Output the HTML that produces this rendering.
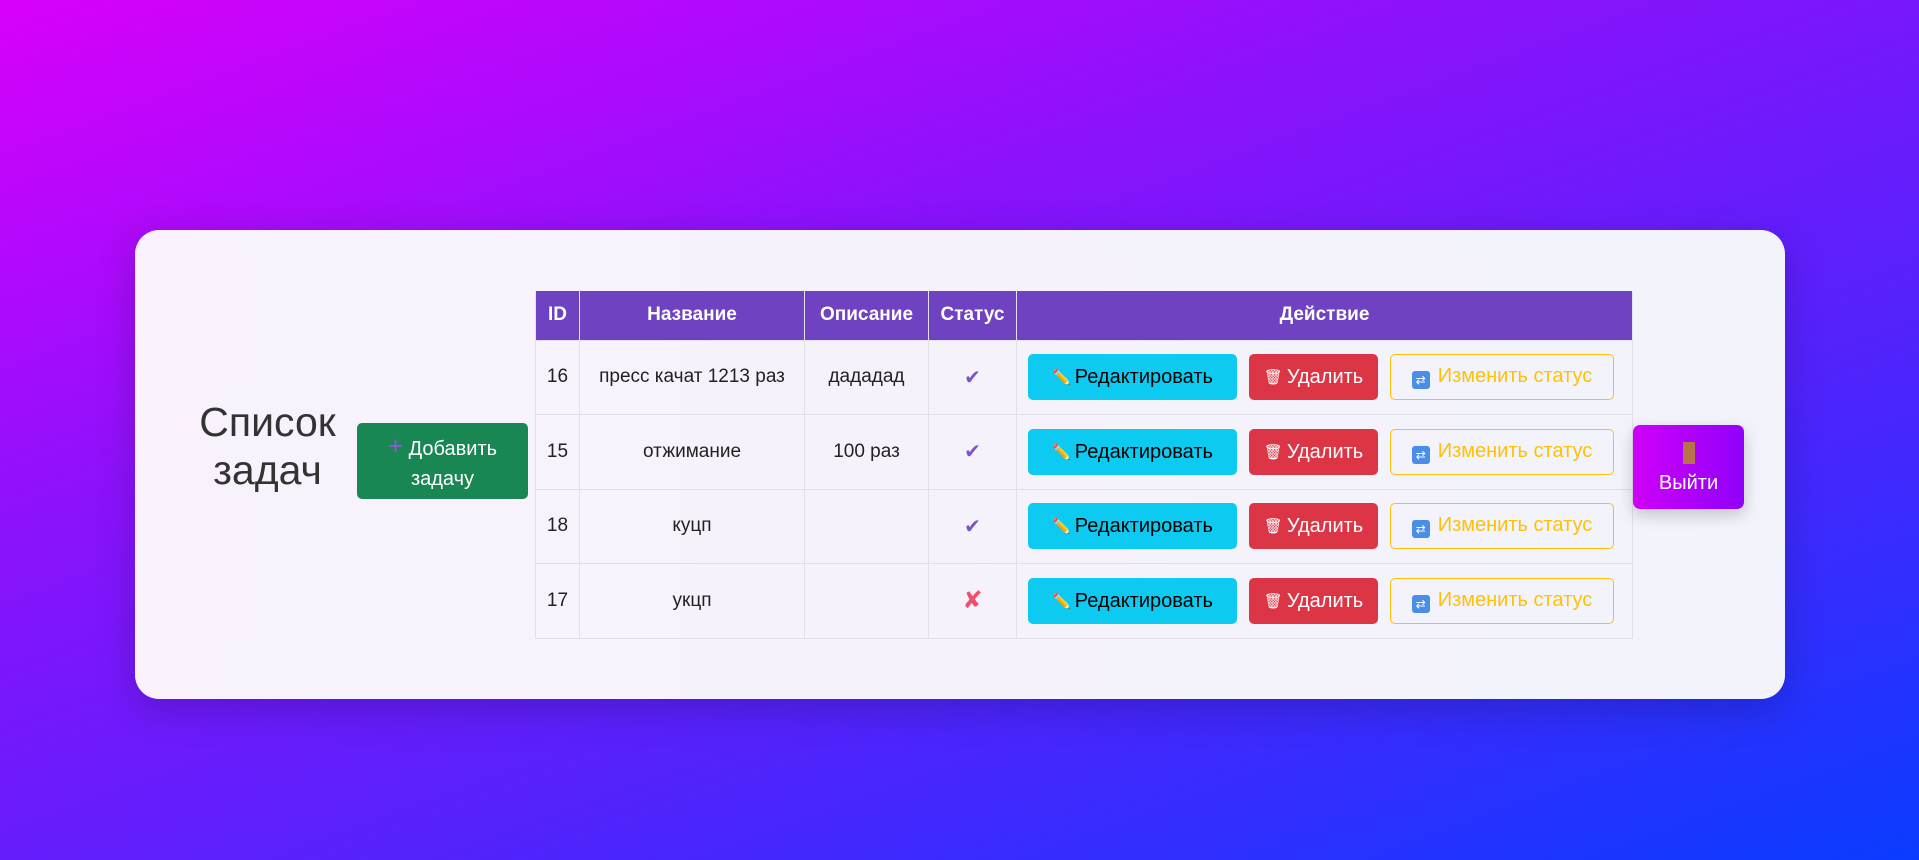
<!DOCTYPE html>
<html><head><meta charset="utf-8"><style>
*{box-sizing:border-box;margin:0;padding:0}
body{width:1919px;height:860px;overflow:hidden;font-family:"Liberation Sans","DejaVu Sans",sans-serif;background:linear-gradient(160deg,#d800fb 0%,#8a12fc 35%,#4a25fd 70%,#0a3cff 100%);position:relative}
.card{position:absolute;left:135px;top:230px;width:1650px;height:469px;border-radius:24px;background:linear-gradient(90deg,#f9f2fc,#f2f3fb);box-shadow:0 10px 40px rgba(0,0,0,.2)}
.title{position:absolute;left:180px;top:398px;width:175px;text-align:center;font-size:41px;line-height:48px;color:#333}
.add{position:absolute;left:357px;top:423px;width:171px;height:76px;background:#198754;border-radius:5px;color:#fff;font-size:20px;line-height:30px;text-align:center;padding-top:8px}
.add b{color:#8a5cd0;font-weight:normal;font-size:26px}
table{position:absolute;left:535px;top:291px;border-collapse:collapse;font-size:19px;color:#222}
th{background:#6f42c1;color:#fff;height:49px;font-size:19px;font-weight:bold;border:1px solid #e4e0ec;border-top:none}
td{height:74.5px;border:1px solid #e2dfe8;text-align:center;vertical-align:middle}
td.act{text-align:left;padding-left:11px;white-space:nowrap}
.ok{color:#7a55c8;font-size:20px}
.no{color:#f0506e;font-size:24px}
.btn{display:inline-block;height:46px;line-height:46px;border-radius:5px;font-size:20px;vertical-align:middle;text-align:center}
.e{width:209px;background:#0dcaf0;color:#000}
.d{width:129px;background:#dc3545;color:#fff;margin-left:12px}
.s{width:224px;border:1.5px solid #ffc107;color:#ffc107;margin-left:12px;line-height:43px}
.em{font-size:15px;vertical-align:1px;margin-right:4px}
.ico{display:inline-block;width:18px;height:18px;border-radius:3px;background:#4a8ee8;vertical-align:-2px;margin-right:8px;color:#fff;font-size:12px;line-height:18px}
.logout{position:absolute;left:1633px;top:425px;width:111px;height:84px;border-radius:7px;background:linear-gradient(90deg,#cf00fa,#9000fa);color:#fff;font-size:20px;text-align:center;box-shadow:0 6px 16px rgba(0,0,0,.2)}
.door{display:block;width:12px;height:22px;background:#b7744a;margin:17px auto 8px}
</style></head><body>
<div class="card"></div>
<div class="title">Список задач</div>
<div class="add"><b>+</b> Добавить<br>задачу</div>
<table>
<tr><th style="width:44px">ID</th><th style="width:225px">Название</th><th style="width:124px">Описание</th><th style="width:88px">Статус</th><th style="width:616px">Действие</th></tr>
<tr><td>16</td><td>пресс качат 1213 раз</td><td>дададад</td><td class="ok">✔</td><td class="act"><span class="btn e"><span class="em">✏️</span>Редактировать</span><span class="btn d"><span class="em">🗑</span>Удалить</span><span class="btn s"><span class="ico">⇄</span>Изменить статус</span></td></tr>
<tr><td>15</td><td>отжимание</td><td>100 раз</td><td class="ok">✔</td><td class="act"><span class="btn e"><span class="em">✏️</span>Редактировать</span><span class="btn d"><span class="em">🗑</span>Удалить</span><span class="btn s"><span class="ico">⇄</span>Изменить статус</span></td></tr>
<tr><td>18</td><td>куцп</td><td></td><td class="ok">✔</td><td class="act"><span class="btn e"><span class="em">✏️</span>Редактировать</span><span class="btn d"><span class="em">🗑</span>Удалить</span><span class="btn s"><span class="ico">⇄</span>Изменить статус</span></td></tr>
<tr><td>17</td><td>укцп</td><td></td><td class="no">✘</td><td class="act"><span class="btn e"><span class="em">✏️</span>Редактировать</span><span class="btn d"><span class="em">🗑</span>Удалить</span><span class="btn s"><span class="ico">⇄</span>Изменить статус</span></td></tr>
</table>
<div class="logout"><span class="door"></span>Выйти</div>
</body></html>
